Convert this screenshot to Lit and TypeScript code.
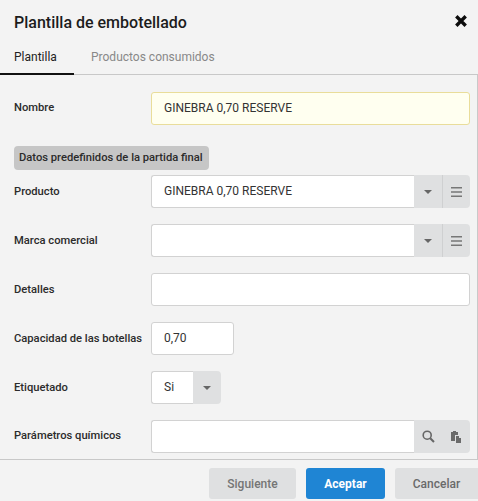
import { LitElement, html, css } from "lit";
import { customElement } from "lit/decorators.js";

const caret = html`<svg width="8" height="4" viewBox="0 0 8 4"><path d="M0 0h8L4 4z" fill="#666"/></svg>`;
const bars = html`<svg width="11" height="10" viewBox="0 0 11 10"><path d="M0 0h11v1.6H0zM0 4.2h11v1.6H0zM0 8.4h11V10H0z" fill="#777"/></svg>`;
const search = html`<svg width="13" height="13" viewBox="0 0 13 13"><circle cx="5.2" cy="5.2" r="4" fill="none" stroke="#666" stroke-width="1.6"/><path d="M8.2 8.2L12 12" stroke="#666" stroke-width="2"/></svg>`;
const paste = html`<svg width="11" height="12" viewBox="0 0 11 12"><path d="M0 1h2V0h3v1h2v3H4v6H0z" fill="#6b6b6b"/><path d="M5 5h3v2h2v5H5z" fill="#6b6b6b"/></svg>`;

@customElement("app-root")
export class AppRoot extends LitElement {
  static styles = css`
    :host {
      display: flex;
      flex-direction: column;
      height: 501px;
      width: 478px;
      overflow: hidden;
      background: #f3f3f3;
      font-family: Roboto, "Liberation Sans", sans-serif;
      font-size: 12px;
      color: #333;
    }
    .head {
      display: flex;
      align-items: center;
      justify-content: space-between;
      height: 45px;
      padding: 0 10px 1px 14px;
      box-sizing: border-box;
    }
    .title { font-size: 16px; font-weight: 500; color: #1c1c1c; }
    .close { display: flex; padding-bottom: 2px; }
    .tabs {
      display: flex;
      height: 30px;
      border-bottom: 1px solid #c8c8c8;
      box-sizing: border-box;
      flex: none;
    }
    .tab {
      padding: 5px 0 0;
      margin-bottom: -1px;
      box-sizing: border-box;
      height: 30px;
      color: #888;
      font-size: 12px;
    }
    .tab.on {
      width: 74px;
      padding-left: 14px;
      color: #222;
      border-bottom: 2px solid #111;
    }
    .tab.other { margin-left: 17px; }
    .body {
      flex: 1;
      min-height: 0;
      overflow: hidden;
      padding: 17px 7px 0 14px;
      border-right: 1px solid #c9c9c9;
      display: flex;
      flex-direction: column;
    }
    .row {
      display: flex;
      align-items: center;
      height: 33px;
      margin-bottom: 16px;
      flex: none;
    }
    .row.first { margin-bottom: 21px; }
    .lab {
      width: 137px;
      flex: none;
      font-size: 11.2px;
      font-weight: 500;
      color: #2b2b2b;
      white-space: nowrap;
    }
    .lab.up { padding-bottom: 2px; }
    .chip {
      align-self: flex-start;
      height: 24px;
      width: 195px;
      box-sizing: border-box;
      padding-left: 5px;
      margin-bottom: 5px;
      background: #c6c6c6;
      border-radius: 4px;
      font-size: 11.2px;
      font-weight: 500;
      color: #2b2b2b;
      line-height: 24px;
      white-space: nowrap;
    }
    .field {
      display: flex;
      flex: 1;
      height: 33px;
      min-width: 0;
      box-sizing: border-box;
    }
    .input {
      flex: 1;
      min-width: 0;
      box-sizing: border-box;
      height: 33px;
      background: #fff;
      border: 1px solid #d2d2d2;
      border-radius: 3px;
      padding: 0 12px;
      line-height: 30px;
      color: #333;
      white-space: nowrap;
    }
    .input.yellow { background: #fffff0; border-color: #e9dd9a; }
    .joined { border-radius: 3px 0 0 3px; border-right: 0; }
    .btn {
      flex: none;
      display: flex;
      align-items: center;
      justify-content: center;
      background: #dfe0e1;
      box-sizing: border-box;
      width: 28px;
    }
    .sep { border-left: 1px solid #cfd0d1; }
    .end { border-radius: 0 4px 4px 0; }
    .nudge { padding-left: 1px; }
    .cap { flex: none; width: 83px; }
    .eti { flex: none; width: 70px; }
    .foot {
      flex: none;
      height: 42px;
      border-top: 1px solid #c8c8c8;
      box-sizing: border-box;
      display: flex;
      justify-content: flex-end;
      gap: 10px;
      padding-top: 8px;
    }
    .b {
      height: 31px;
      box-sizing: border-box;
      border-radius: 3px;
      background: #dfe0e1;
      color: #6a6a6a;
      font-size: 12px;
      font-weight: 500;
      display: flex;
      align-items: center;
      justify-content: center;
    }
    .sig { width: 87px; color: #757575; }
    .ace { width: 79px; background: #1f85d4; color: #fff; font-weight: 700; }
    .can { width: 83px; border-radius: 3px 0 0 3px; }
  `;

  private sel(value: string) {
    return html`<div class="field">
      <div class="input joined">${value}</div>
      <div class="btn">${caret}</div>
      <div class="btn sep end">${bars}</div>
    </div>`;
  }

  render() {
    return html`
      <div class="head">
        <span class="title">Plantilla de embotellado</span>
        <span class="close"><svg width="14" height="14" viewBox="0 0 14 14"><path d="M2.3 2.3l9.4 9.4M11.7 2.3l-9.4 9.4" stroke="#0c0c0c" stroke-width="3.4" fill="none"/></svg></span>
      </div>
      <div class="tabs">
        <div class="tab on">Plantilla</div>
        <div class="tab other">Productos consumidos</div>
      </div>
      <div class="body">
        <div class="row first">
          <div class="lab up">Nombre</div>
          <div class="field"><div class="input yellow">GINEBRA 0,70 RESERVE</div></div>
        </div>
        <div class="chip">Datos predefinidos de la partida final</div>
        <div class="row"><div class="lab">Producto</div>${this.sel("GINEBRA 0,70 RESERVE")}</div>
        <div class="row"><div class="lab">Marca comercial</div>${this.sel("")}</div>
        <div class="row"><div class="lab">Detalles</div><div class="field"><div class="input"></div></div></div>
        <div class="row"><div class="lab">Capacidad de las botellas</div><div class="field cap"><div class="input">0,70</div></div></div>
        <div class="row">
          <div class="lab">Etiquetado</div>
          <div class="field eti"><div class="input joined">Si</div><div class="btn end">${caret}</div></div>
        </div>
        <div class="row">
          <div class="lab up">Parámetros químicos</div>
          <div class="field">
            <div class="input joined"></div>
            <div class="btn">${search}</div>
            <div class="btn end nudge">${paste}</div>
          </div>
        </div>
      </div>
      <div class="foot">
        <div class="b sig">Siguiente</div>
        <div class="b ace">Aceptar</div>
        <div class="b can">Cancelar</div>
      </div>
    `;
  }
}
